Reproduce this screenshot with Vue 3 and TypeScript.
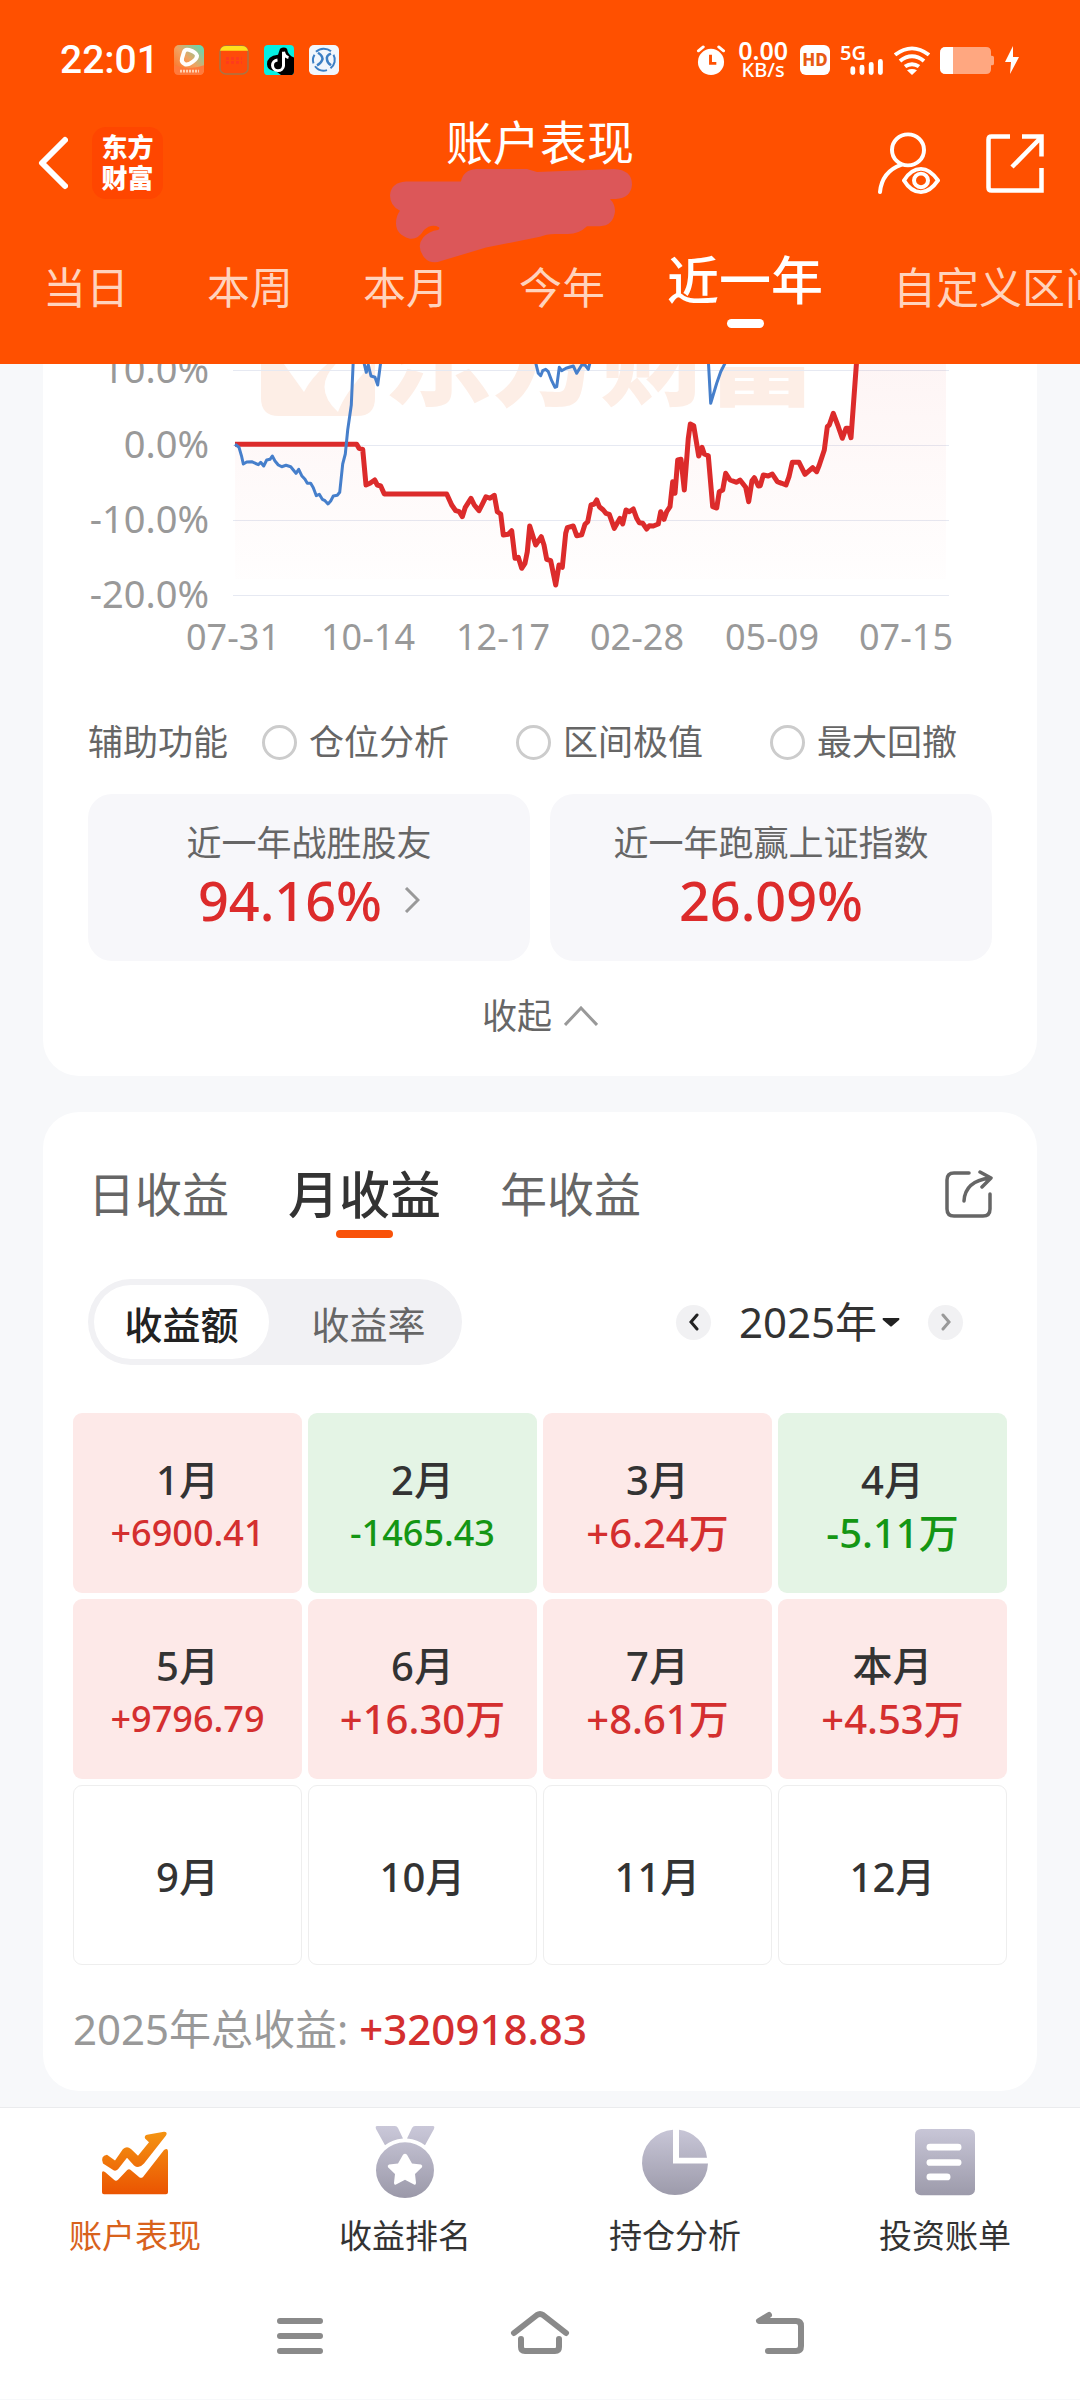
<script setup lang="ts">
import { ref } from 'vue'

type Point = [number, number]
interface Month { name: string; value?: string; tone: 'up' | 'down' | 'none' }

const rangeTabs = ['当日', '本周', '本月', '今年', '近一年', '自定义区间']
const activeRange = ref('近一年')
const helpers = ['仓位分析', '区间极值', '最大回撤']
const profitTabs = ['日收益', '月收益', '年收益']
const activeProfit = ref('月收益')
const modes = ['收益额', '收益率']
const activeMode = ref('收益额')
const year = ref('2025年')

const months: Month[] = [
  { name: '1月', value: '+6900.41', tone: 'up' },
  { name: '2月', value: '-1465.43', tone: 'down' },
  { name: '3月', value: '+6.24万', tone: 'up' },
  { name: '4月', value: '-5.11万', tone: 'down' },
  { name: '5月', value: '+9796.79', tone: 'up' },
  { name: '6月', value: '+16.30万', tone: 'up' },
  { name: '7月', value: '+8.61万', tone: 'up' },
  { name: '本月', value: '+4.53万', tone: 'up' },
  { name: '9月', tone: 'none' },
  { name: '10月', tone: 'none' },
  { name: '11月', tone: 'none' },
  { name: '12月', tone: 'none' },
]

const yLabels = [
  { text: '10.0%', y: 10 },
  { text: '0.0%', y: 85 },
  { text: '-10.0%', y: 160 },
  { text: '-20.0%', y: 235 },
]
const xLabels = [
  { text: '07-31', x: 193 },
  { text: '10-14', x: 328 },
  { text: '12-17', x: 463 },
  { text: '02-28', x: 597 },
  { text: '05-09', x: 732 },
  { text: '07-15', x: 866 },
]

// Samples are stored at three units per chart pixel.
const account: Point[] = [
  [585, 253], [950, 253], [957, 265], [968, 268], [978, 375], [990, 370], [1004, 360], [1012, 375],
  [1022, 378], [1033, 402], [1220, 402], [1235, 435], [1247, 452], [1258, 455], [1267, 470], [1276, 442],
  [1293, 415], [1303, 435], [1317, 452], [1328, 430], [1338, 410], [1350, 415], [1363, 406], [1372, 455],
  [1382, 462], [1390, 525], [1405, 523], [1415, 512], [1425, 595], [1435, 592], [1445, 625], [1455, 610],
  [1462, 575], [1469, 498], [1487, 555], [1504, 530], [1512, 555], [1520, 598], [1532, 602], [1547, 675],
  [1557, 615], [1567, 622], [1577, 520], [1582, 503], [1600, 498], [1610, 527], [1625, 524], [1635, 493],
  [1643, 485], [1653, 435], [1663, 432], [1670, 420], [1678, 440], [1690, 450], [1698, 460], [1708, 463],
  [1723, 505], [1740, 475], [1748, 492], [1758, 450], [1768, 455], [1780, 447], [1790, 475], [1798, 488],
  [1808, 490], [1820, 507], [1828, 497], [1840, 498], [1855, 492], [1862, 455], [1872, 478], [1880, 455],
  [1890, 440], [1898, 365], [1905, 400], [1913, 300], [1923, 298], [1933, 390], [1945, 235], [1951, 192],
  [1961, 197], [1976, 288], [1986, 262], [1993, 282], [2005, 287], [2018, 440], [2030, 444], [2038, 395],
  [2048, 390], [2057, 340], [2070, 360], [2090, 367], [2100, 360], [2117, 382], [2126, 425], [2136, 362],
  [2143, 353], [2155, 378], [2161, 377], [2170, 345], [2185, 348], [2197, 342], [2212, 365], [2225, 370],
  [2238, 375], [2247, 350], [2257, 307], [2277, 307], [2295, 343], [2318, 323], [2330, 335], [2338, 315],
  [2353, 270], [2362, 200], [2368, 195], [2380, 160], [2395, 200], [2407, 235], [2418, 205], [2425, 205],
  [2433, 233], [2450, 0],
]
const index: Point[][] = [
  [
    [585, 253], [597, 262], [605, 290], [610, 312], [620, 306], [635, 305], [655, 314], [662, 307],
    [671, 318], [680, 300], [690, 298], [697, 288], [705, 303], [715, 315], [725, 320], [738, 316],
    [752, 320], [768, 340], [776, 328], [785, 347], [795, 358], [802, 370], [812, 370], [820, 383],
    [829, 407], [838, 403], [847, 418], [855, 422], [864, 432], [872, 423], [880, 408], [892, 406],
    [899, 397], [908, 312], [916, 282], [923, 210], [934, 135], [940, 0],
  ],
  [[970, 0], [979, 37], [985, 15], [993, 48], [1005, 52], [1013, 75], [1023, 0]],
  [
    [1485, 0], [1495, 40], [1502, 47], [1508, 32], [1517, 28], [1525, 35], [1535, 62], [1545, 82],
    [1550, 80], [1558, 22], [1565, 32], [1578, 25], [1600, 18], [1610, 40], [1625, 15], [1635, 15],
    [1645, 28], [1652, 0],
  ],
  [[2005, 0], [2012, 130], [2030, 70], [2042, 35], [2060, 0]],
]
const toPoints = (list: Point[]) => list.map(([x, y]) => `${(x / 3).toFixed(1)},${(y / 3).toFixed(1)}`).join(' ')
const accountLine = toPoints(account)
const accountArea = `${accountLine} 906,0 906,219 195,219`
</script>

<template>
  <div class="page">
    <header class="header">
      <div class="status">
        <div class="status-side">
          <span class="clock">22:01</span>
          <svg class="app" width="30" height="30" viewBox="0 0 30 31" preserveAspectRatio="none">
            <defs>
              <linearGradient id="video" x1="0" y1="1" x2="1" y2="0">
                <stop offset="0" stop-color="#ff6a1c" /><stop offset=".5" stop-color="#f2a260" /><stop offset="1" stop-color="#4fe0bd" />
              </linearGradient>
            </defs>
            <rect width="30" height="31" rx="5" fill="url(#video)" />
            <path d="M0 21q15 6 30 0v5q0 5-5 5H5q-5 0-5-5z" fill="#ff7a3c" />
            <path d="M10 7q1-3 5-2 7 2 8 6 0 3-4 6-5 4-8 3-4-2-3-6z" fill="none" stroke="#fff" stroke-width="4" />
            <path d="M6 27h19" stroke="#ffd0b0" stroke-width="3" stroke-dasharray="2 1" />
          </svg>
          <svg class="app" width="30" height="30" viewBox="0 0 30 31" preserveAspectRatio="none">
            <rect x="1" y="1" width="28" height="29" rx="6" fill="#ff4b0a" stroke="#a87545" stroke-width="1.5" />
            <path d="M1 6q1-5 6-5h16q5 0 6 5z" fill="#ffe11c" />
            <path d="M7 14h16M7 18h16" stroke="#ff3b1c" stroke-width="3" stroke-dasharray="3 2" />
          </svg>
          <svg class="app" width="30" height="30" viewBox="0 0 30 31" preserveAspectRatio="none">
            <rect width="30" height="31" rx="4" fill="#05f0e2" />
            <path d="M16 4q4-3 7 0 1 7 7 9v14q0 4-4 4h-9l-5-4Q3 27 3 20q0-9 11-10z" fill="#000" />
            <path d="M19.500 7v14.500a5.500 5.500 0 1 1-6-6M19.500 7q1 5 5 6" fill="none" stroke="#fff" stroke-width="3" />
          </svg>
          <svg class="app" width="30" height="30" viewBox="0 0 30 31" preserveAspectRatio="none">
            <rect width="30" height="31" rx="5" fill="#f2f6fc" />
            <path d="M7 7a11 11 0 0 1 15-.5M24.500 10a11 11 0 0 1-3 14M18 26a11 11 0 0 1-12-4M4.500 19a11 11 0 0 1 1-9" fill="none" stroke="#3d7fc4" stroke-width="2" />
            <path d="M9 8q6 4 4 8-1 3-5 5M22 9q-5 2-4 6 0 3 4 6" fill="none" stroke="#3d7fc4" stroke-width="2.500" />
          </svg>
        </div>
        <div class="status-side right">
          <svg width="30" height="30" viewBox="0 0 30 31">
            <circle cx="15" cy="17.500" r="13.500" fill="#fff" />
            <path d="M2 6l5-4M28 6l-5-4" stroke="#fff" stroke-width="3" stroke-linecap="round" />
            <path d="M14.500 10v9h6" fill="none" stroke="#ff5000" stroke-width="3" />
          </svg>
          <span class="speed"><b>0.00</b><i>KB/s</i></span>
          <span class="hd">HD</span>
          <span class="signal">
            <b>5G</b>
            <svg width="44" height="30" viewBox="0 0 44 31"><path d="M12.500 24.500v4M22 23v5.500M31.500 20v8.500M41 17v11.500" stroke="#fff" stroke-width="5" stroke-linecap="round" /></svg>
          </span>
          <svg width="36" height="29" viewBox="1 0 36 31" preserveAspectRatio="none">
            <path d="M2 9.500q17-14 34 0M7 16q12-10 24 0M12 22q7-5 14 0" fill="none" stroke="#fff" stroke-width="4" />
            <path d="M14 26q5-3 10 0l-5 5z" fill="#fff" />
          </svg>
          <svg width="54" height="27" viewBox="0 0 54 28" preserveAspectRatio="none">
            <path d="M6 0h40q5 0 5 5v4h1q2 0 2 2v6q0 2-2 2h-1v4q0 5-5 5H6q-6 0-6-6V6q0-6 6-6z" fill="#ffa780" />
            <path d="M6 0h7v28H6q-6 0-6-6V6q0-6 6-6z" fill="#fff" />
          </svg>
          <svg width="16" height="28" viewBox="0 0 16 28"><path d="M9 0L1 16h6L6 28l9-17H9z" fill="#fff" /></svg>
        </div>
      </div>

      <div class="nav">
        <div class="nav-side">
          <button class="plain" aria-label="返回">
            <svg width="32" height="54" viewBox="0 0 32 54"><path d="M29 4L6 27l23 23" fill="none" stroke="#fff" stroke-width="6" stroke-linecap="round" stroke-linejoin="round" /></svg>
          </button>
          <span class="logo">东方<br />财富</span>
        </div>
        <div class="heading">
          <h1>账户表现</h1>
          <svg width="300" height="95" viewBox="390 173 300 98" preserveAspectRatio="none">
            <path d="M406 187H461Q463 175 476 174H527L537 177L614 174Q632 175 632 190Q631 204 616 205H610Q615 210 615 218Q613 233 600 233H587Q579 241 568 241H555Q546 241 540 244L486 255L441 269Q431 273 424 265Q416 254 423 245Q429 238 438 237Q440 236 439 234Q431 230 424 237Q418 247 410 246Q396 242 396 230Q396 222 400 217Q390 212 390 201Q391 188 406 187Z" fill="#dc5759" />
          </svg>
        </div>
        <div class="nav-side end">
          <button class="plain" aria-label="账户可见性">
            <svg width="64" height="62" viewBox="0 0 64 64" preserveAspectRatio="none" fill="none" stroke="#fff" stroke-width="4" stroke-linecap="round">
              <circle cx="32" cy="18.500" r="16" />
              <path d="M4 62q2-21 21-28" />
              <path d="M28 50q7-12 17-12 9 0 17 12-8 12-17 12-10 0-17-12z" stroke-linejoin="round" />
              <circle cx="45" cy="50" r="7" />
            </svg>
          </button>
          <button class="plain" aria-label="分享">
            <svg width="58" height="59" viewBox="0 0 58 59" fill="none" stroke="#fff" stroke-width="4.500">
              <path d="M24 2.500H5.500q-3 0-3 3v48q0 3 3 3h50V34M36 2.500h19.500v20M55 3.500L26 33" />
            </svg>
          </button>
        </div>
      </div>

      <nav class="ranges">
        <button v-for="tab in rangeTabs" :key="tab" class="plain range" :class="{ active: tab === activeRange }" @click="activeRange = tab">{{ tab }}</button>
      </nav>
    </header>

    <main class="content">
      <section class="card chart-card">
        <svg class="chart" viewBox="3 4 994 300" role="img" aria-label="收益率走势">
          <defs>
            <linearGradient id="fade" x1="0" y1="0" x2="0" y2="1">
              <stop offset="0" stop-color="#e43030" stop-opacity=".05" /><stop offset="1" stop-color="#e43030" stop-opacity=".005" />
            </linearGradient>
          </defs>
          <g class="watermark">
            <path d="M221 0H335V38Q335 56 317 56H239Q221 56 221 38Z" />
            <path class="cut" d="M241 0L264 32Q272 16 292 0ZM300 0Q270 26 298 52Q304 34 330 6L334 0Z" />
            <text x="344" y="37">东方财富</text>
          </g>
          <path v-for="label in yLabels" :key="label.text" class="rule" :d="`M193 ${label.y + 0.5}H909`" />
          <polygon :points="accountArea" fill="url(#fade)" />
          <polyline class="line account" :points="accountLine" />
          <polyline v-for="(part, i) in index" :key="i" class="line index" :points="toPoints(part)" />
          <text v-for="label in yLabels" :key="label.text" class="axis end" x="169" :y="label.y + 13">{{ label.text }}</text>
          <text v-for="label in xLabels" :key="label.text" class="axis mid" :x="label.x" y="290">{{ label.text }}</text>
        </svg>

        <div class="helpers">
          <span>辅助功能</span>
          <label v-for="item in helpers" :key="item" class="helper"><input type="radio" name="helper" :value="item" />{{ item }}</label>
        </div>

        <div class="stats">
          <button class="plain stat">
            <span>近一年战胜股友</span>
            <span class="stat-value">94.16%
              <svg width="16" height="26" viewBox="0 0 16 26"><path d="M2 1l12 12L2 25" fill="none" stroke="#999" stroke-width="3" /></svg>
            </span>
          </button>
          <div class="stat">
            <span>近一年跑赢上证指数</span>
            <span class="stat-value">26.09%</span>
          </div>
        </div>

        <button class="plain collapse">收起
          <svg width="34" height="20" viewBox="0 0 34 20"><path d="M1 19L17 2l16 17" fill="none" stroke="#999" stroke-width="3" /></svg>
        </button>
      </section>

      <section class="card profit-card">
        <div class="profit-head">
          <div class="profit-tabs">
            <button v-for="tab in profitTabs" :key="tab" class="plain profit-tab" :class="{ active: tab === activeProfit }" @click="activeProfit = tab">{{ tab }}</button>
          </div>
          <button class="plain" aria-label="分享收益">
            <svg width="48" height="48" viewBox="0 0 48 48" fill="none" stroke="#666" stroke-width="3.500" stroke-linecap="round">
              <path d="M24 3H9Q2 3 2 10v29q0 7 7 7h29q7 0 7-7V24" />
              <path d="M19 31q1-20 26-23M35 2l11 6-9 9" stroke-linejoin="round" />
            </svg>
          </button>
        </div>

        <div class="filters">
          <div class="segment">
            <button v-for="mode in modes" :key="mode" class="plain mode" :class="{ active: mode === activeMode }" @click="activeMode = mode">{{ mode }}</button>
          </div>
          <div class="year">
            <button class="plain step" aria-label="上一年">
              <svg width="10" height="18" viewBox="0 0 10 18"><path d="M8 2L2 9l6 7" fill="none" stroke="#222" stroke-width="3" stroke-linecap="round" /></svg>
            </button>
            <label class="year-pick">
              <select v-model="year" aria-label="年份"><option>2025年</option></select>
              <svg width="18" height="9" viewBox="0 0 18 9"><path d="M1 0h16q1 1 0 2l-7 6q-1 1-2 0L1 2Q0 1 1 0z" fill="#222" /></svg>
            </label>
            <button class="plain step" aria-label="下一年">
              <svg width="10" height="18" viewBox="0 0 10 18"><path d="M2 2l6 7-6 7" fill="none" stroke="#999" stroke-width="3" stroke-linecap="round" /></svg>
            </button>
          </div>
        </div>

        <div class="months">
          <div v-for="month in months" :key="month.name" class="month" :class="month.tone">
            <span class="month-name">{{ month.name }}</span>
            <span v-if="month.value" class="month-value" :class="{ large: month.value.endsWith('万') }">{{ month.value }}</span>
          </div>
        </div>

        <p class="total">2025年总收益: <strong>+320918.83</strong></p>
      </section>
    </main>

    <footer class="footer">
      <nav class="tabbar">
        <a href="#performance" class="tab current">
          <svg width="76" height="73" viewBox="0 0 76 76" preserveAspectRatio="none">
            <defs>
              <linearGradient id="warm" x1="0" y1="0" x2="0" y2="76" gradientUnits="userSpaceOnUse"><stop offset="0" stop-color="#f59a14" /><stop offset="1" stop-color="#ea4f00" /></linearGradient>
              <linearGradient id="cool" x1="0" y1="0" x2="0" y2="76" gradientUnits="userSpaceOnUse"><stop offset="0" stop-color="#cac8d9" /><stop offset="1" stop-color="#9a98a8" /></linearGradient>
            </defs>
            <g fill="url(#warm)">
              <path d="M5 49q0-3 3-1l9 8q2 2 4 0l9-10q2-2 4 0l8 7q2 2 4 0L67 25q4-3 4 2v42q0 2-2 2H7q-2 0-2-2z" />
              <path d="M10 30l8 6 8-12q4-4 8 0l7 7 11-14-4-4q-1-3 2-4l17-3q4 0 2 4L47 39q-5 6-10 2l-7-8-9 12q-3 3-6 0L6 39q-3-8 4-9z" />
            </g>
          </svg>
          <span>账户表现</span>
        </a>
        <a href="#ranking" class="tab">
          <svg width="76" height="73" viewBox="0 0 76 76" preserveAspectRatio="none" fill="url(#cool)">
            <path d="M10 0h18q2 0 3 2l5 11q-11 1-18 7L9 3Q8 0 10 0zM48 0h18q2 0 1 3l-9 17q-7-6-18-7l5-11q1-2 3-2z" />
            <path fill-rule="evenodd" d="M38 17a29 29 0 1 1 0 58 29 29 0 0 1 0-58zm-2 13l-5 9-9 1q-2 1-1 3l7 7-1 9q0 3 2 2l9-5 9 5q2 1 2-2l-1-9 7-7q1-2-1-3l-9-1-5-9q-2-2-4 0z" />
          </svg>
          <span>收益排名</span>
        </a>
        <a href="#position" class="tab">
          <svg width="76" height="73" viewBox="0 0 76 76" preserveAspectRatio="none" fill="url(#cool)">
            <path d="M36 4v35h35a33 34 0 1 1-35-35zM42 4a32 32 0 0 1 28 29H42z" />
          </svg>
          <span>持仓分析</span>
        </a>
        <a href="#bill" class="tab">
          <svg width="76" height="73" viewBox="0 0 76 76" preserveAspectRatio="none">
            <rect x="8" y="3" width="60" height="69" rx="6" fill="url(#cool)" />
            <path d="M23 22h28M23 38h28M23 53h17" stroke="#fff" stroke-width="7" stroke-linecap="round" />
          </svg>
          <span>投资账单</span>
        </a>
      </nav>
      <div class="system">
        <button class="plain" aria-label="菜单"><svg width="60" height="46" viewBox="0 0 60 46"><path d="M10 11h40M10 26h40M10 41h40" /></svg></button>
        <button class="plain" aria-label="主页"><svg width="60" height="46" viewBox="0 0 60 46"><path d="M4 23L27 5q3-2 6 0l23 18M11 29v8q0 4 4 4h30q4 0 4-4v-8" /></svg></button>
        <button class="plain" aria-label="后退"><svg width="60" height="46" viewBox="0 0 60 46"><path d="M19 5L9 11h37q5 0 5 5v20q0 5-5 5H18" /></svg></button>
      </div>
    </footer>
  </div>
</template>

<style>
body {
  margin: 0;
  background: #f7f8fa;
}
</style>

<style scoped>
.page {
  font-family: 'Noto Sans', 'Noto Sans CJK SC', sans-serif;
  color: #333;
  background: #f7f8fa;
}
.page *,
.page *::before,
.page *::after {
  box-sizing: border-box;
}
svg {
  display: block;
  flex: none;
}
.plain {
  border: 0;
  padding: 0;
  background: none;
  font: inherit;
  color: inherit;
  cursor: pointer;
}

/* Header */
.header {
  background: #ff5000;
  color: #fff;
  overflow: hidden;
}
.status {
  height: 116px;
  padding: 4px 60px 0;
  display: flex;
  justify-content: space-between;
  align-items: center;
}
.status-side {
  display: flex;
  align-items: center;
  gap: 15px;
}
.status-side.right {
  gap: 10px;
}
.clock {
  font: 500 39px/40px Roboto, sans-serif;
}
.speed {
  padding: 0 2px;
  display: flex;
  flex-direction: column;
  align-items: center;
}
.speed b {
  font-size: 25px;
  line-height: 19px;
  font-weight: 600;
}
.speed i {
  font-size: 20px;
  line-height: 19px;
  font-style: normal;
  font-weight: 500;
}
.hd {
  width: 30px;
  height: 30px;
  border-radius: 6px;
  background: #fff;
  color: #e85a14;
  font-size: 17px;
  line-height: 30px;
  font-weight: 800;
  text-align: center;
}
.signal {
  position: relative;
}
.signal b {
  position: absolute;
  top: 0;
  left: 0;
  font-size: 20px;
  line-height: 16px;
  font-weight: 600;
}
.nav {
  height: 138px;
  padding: 0 36px;
  display: grid;
  grid-template-columns: 1fr auto 1fr;
}
.nav-side {
  height: 94px;
  display: flex;
  align-items: center;
  gap: 24px;
}
.nav-side.end {
  justify-content: flex-end;
  gap: 46px;
}
.logo {
  width: 71px;
  height: 72px;
  padding-top: 5px;
  border-radius: 14px;
  background: #ff4600;
  font-size: 26px;
  line-height: 31px;
  font-weight: 800;
  text-align: center;
}
.heading h1 {
  margin: 0;
  font-size: 47px;
  line-height: 52px;
  font-weight: 400;
  text-align: center;
}
.ranges {
  height: 110px;
  padding-left: 43px;
  display: grid;
  grid-template-columns: 164px 156px 156px 148px 226px auto;
  justify-items: start;
  align-items: start;
}
.range {
  font-size: 43px;
  line-height: 68px;
  white-space: nowrap;
  color: #ffd3bd;
}
.range.active {
  font-size: 52px;
  line-height: 52px;
  font-weight: 500;
  color: #fff;
}
.range.active::after {
  content: '';
  display: block;
  width: 37px;
  height: 9px;
  margin: 13px auto 0;
  border-radius: 5px;
  background: #fff;
}

/* Cards */
.content {
  padding: 0 43px 16px;
}
.card {
  background: #fff;
  border-radius: 36px;
}
.chart-card {
  border-radius: 0 0 36px 36px;
  padding-bottom: 36px;
  font-size: 35px;
  line-height: 48px;
  color: #666;
}
.chart {
  width: 100%;
  height: auto;
}
.axis {
  font-size: 36px;
  fill: #999;
}
.axis.end {
  font-size: 38px;
  text-anchor: end;
}
.axis.mid {
  text-anchor: middle;
}
.rule {
  stroke: #e6e9f2;
  stroke-width: 1;
}
.line {
  fill: none;
  stroke-linejoin: round;
}
.line.account {
  stroke: #dc2b2b;
  stroke-width: 5;
}
.line.index {
  stroke: #467fcb;
  stroke-width: 3;
}
.watermark {
  fill: #fdeee6;
  font-size: 108px;
  font-weight: 900;
}
.watermark .cut {
  fill: #fff;
}
.helpers {
  margin: 54px 45px 0;
  display: grid;
  grid-template-columns: 174px repeat(3, 254px);
}
.helper {
  display: flex;
  align-items: center;
  gap: 12px;
}
.helper input {
  appearance: none;
  width: 35px;
  height: 35px;
  margin: 0;
  border: 3px solid #ccc;
  border-radius: 50%;
}
.helper input:checked {
  border: 10px solid #ff5000;
}
.stats {
  margin: 28px 45px 0;
  display: grid;
  grid-template-columns: 1fr 1fr;
  gap: 20px;
}
.stat {
  height: 167px;
  padding-top: 25px;
  border-radius: 24px;
  background: #f7f7fa;
  display: flex;
  flex-direction: column;
  align-items: center;
}
.stat-value {
  display: flex;
  align-items: center;
  gap: 22px;
  font-size: 54px;
  line-height: 66px;
  font-weight: 500;
  color: #dc2b2b;
}
.collapse {
  margin: 31px auto 0;
  display: flex;
  align-items: center;
  gap: 12px;
}
.profit-card {
  margin-top: 36px;
  padding: 47px 30px 34px;
}
.profit-head {
  padding: 0 14px 0 15px;
  display: flex;
  justify-content: space-between;
  align-items: flex-start;
}
.profit-head > .plain {
  margin-top: 11px;
}
.profit-tabs {
  display: flex;
  gap: 59px;
}
.profit-tab {
  height: 80px;
  display: flex;
  flex-direction: column;
  align-items: center;
  font-size: 47px;
  line-height: 71px;
  color: #666;
}
.profit-tab.active {
  font-size: 51px;
  font-weight: 500;
  color: #333;
}
.profit-tab.active::after {
  content: '';
  width: 57px;
  height: 8px;
  border-radius: 4px;
  background: #f95209;
}
.filters {
  margin-top: 40px;
  padding: 0 44px 0 15px;
  display: flex;
  justify-content: space-between;
  align-items: center;
}
.segment {
  padding: 6px;
  border-radius: 43px;
  background: #f1f1f4;
  display: flex;
  gap: 12px;
}
.mode {
  width: 175px;
  height: 74px;
  border-radius: 37px;
  font-size: 38px;
  color: #666;
}
.mode.active {
  background: #fff;
  color: #222;
  font-weight: 500;
}
.year {
  display: flex;
  align-items: center;
  gap: 28px;
}
.year-pick {
  display: flex;
  align-items: center;
  gap: 4px;
}
.year-pick select {
  appearance: none;
  border: 0;
  padding: 0;
  background: none;
  font: inherit;
  font-size: 42px;
  line-height: 56px;
  color: #333;
}
.step {
  width: 35px;
  height: 35px;
  border-radius: 50%;
  background: #f1f1f3;
  display: flex;
  align-items: center;
  justify-content: center;
}
.months {
  margin-top: 48px;
  display: grid;
  grid-template-columns: repeat(4, 1fr);
  gap: 6px;
}
.month {
  height: 180px;
  padding-top: 4px;
  border-radius: 9px;
  display: flex;
  flex-direction: column;
  align-items: center;
  justify-content: center;
}
.month-name {
  font-size: 40px;
  line-height: 56px;
  font-weight: 500;
}
.month-value {
  font-size: 36px;
  line-height: 50px;
  font-weight: 500;
}
.month-value.large {
  font-size: 40px;
}
.up {
  background: #fde9e8;
}
.up .month-value {
  color: #d42f2f;
}
.down {
  background: #e4f4e5;
}
.down .month-value {
  color: #149614;
}
.none {
  border: 1px solid #eee;
}
.total {
  margin: 36px 0 0;
  font-size: 42px;
  line-height: 56px;
  color: #999;
}
.total strong {
  font-weight: 500;
  color: #d42f2f;
}

/* Bottom bars */
.footer {
  border-top: 1px solid #eaebed;
  background: #fff;
}
.tabbar {
  padding-top: 18px;
  display: grid;
  grid-template-columns: repeat(4, 1fr);
}
.tab {
  display: flex;
  flex-direction: column;
  align-items: center;
  gap: 14px;
  font-size: 33px;
  line-height: 46px;
  color: #333;
  text-decoration: none;
}
.tab.current {
  color: #d8621c;
}
.system {
  padding: 51px 180px 43px;
  display: grid;
  grid-template-columns: repeat(3, 1fr);
  justify-items: center;
}
.system path {
  fill: none;
  stroke: #8a8a8a;
  stroke-width: 6;
  stroke-linecap: round;
  stroke-linejoin: round;
}
</style>
